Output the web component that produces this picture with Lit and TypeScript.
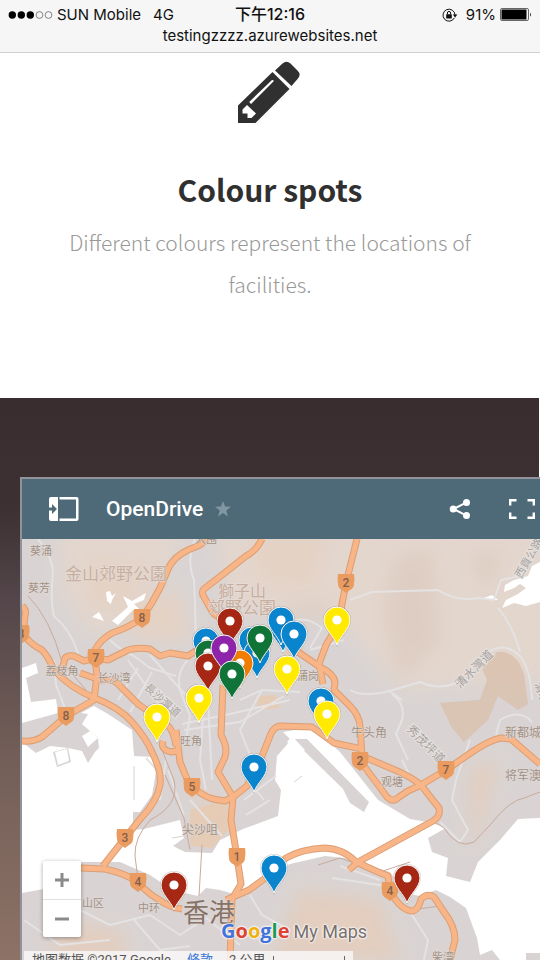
import { LitElement, html, svg, css } from "lit";
import { customElement } from "lit/decorators.js";

type Spot = [x: number, y: number, tone: string];

const BLUE = "#0a84cc";
const GREEN = "#107438";
const RED = "#a52714";
const YELLOW = "#ffea00";
const PURPLE = "#8e24aa";
const ORANGE = "#f07c00";

const spots: Spot[] = [
  [206, 641, BLUE], [208, 653, GREEN], [283, 627, BLUE], [281, 620, BLUE], [252, 640, BLUE],
  [257, 653, BLUE], [294, 634, BLUE], [240, 663, ORANGE], [230, 621, RED], [260, 638, GREEN],
  [208, 666, RED], [224, 648, PURPLE], [232, 674, GREEN], [337, 620, YELLOW], [287, 669, YELLOW],
  [199, 698, YELLOW], [157, 717, YELLOW], [321, 701, BLUE], [327, 714, YELLOW],
  [254, 767, BLUE], [274, 868, BLUE], [174, 885, RED], [407, 878, RED],
];

const shields: [number, number, string][] = [
  [142, 618, "8"], [96, 658, "7"], [66, 716, "8"], [21, 634, "8"], [346, 583, "2"], [192, 787, "5"],
  [125, 838, "3"], [138, 882, "4"], [237, 857, "1"], [360, 761, "2"], [446, 770, "7"], [390, 891, "4"],
];

const highways = [
  "M207 539L200 545L188 550Q175 556 169 567L160 588Q152 604 142 618Q128 628 112 633Q100 640 95 650L94 658",
  "M62 670L65 658Q68 655 74 656L84 661L96 658L108 660L128 650Q138 647 150 649L160 656L170 653L188 656L205 645",
  "M22 606Q27 610 25 616L23 634Q30 644 42 650Q48 656 54 670Q70 688 95 698Q120 708 132 722Q146 738 152 752Q162 772 160 785Q157 802 141 818L125 838L103 866",
  "M95 660L97 675L94 700L66 716Q54 727 42 737Q34 742 22 741",
  "M80 673L100 680Q114 678 120 686L138 704L166 724Q174 730 176 746",
  "M80 868L105 869Q124 873 138 882Q147 893 158 899Q170 908 182 909",
  "M357 539L346 583L338 625L326 645L319 664L323 684",
  "M298 652L320 667Q334 674 335 682L334 690L350 706Q359 715 360 726L362 756L395 770Q418 780 424 789L439 808Q441 816 433 821L358 862L349 870",
  "M364 766L387 797Q393 803 399 797L408 791L421 785L446 770L472 752Q490 740 501 738L511 739L540 764",
  "M233 797L247 786L262 756L270 736Q273 727 280 726L312 727L334 743L362 749",
  "M223 685L221 735Q228 747 225 757L218 772L233 797L231 820L237 857L241 884L232 899L230 960",
  "M163 741Q160 750 172 752L180 750M176 730L180 762L189 784Q202 796 213 799L225 801L233 797",
  "M226 900L249 890L264 879L286 858Q302 849 325 848Q344 849 356 862L378 872L388 876L390 891Q401 911 413 911Q419 909 421 899Q427 893 434 897L444 912Q455 926 455 940L450 960",
  "M262 539Q256 551 246 556L222 575L204 589Q201 592 204 597L213 613L226 622",
];

const lanes = [
  "M38 539Q52 555 53 572Q50 600 54 616Q70 630 76 648L80 660",
  "M54 660L56 685L68 716M110 640Q120 650 134 656L150 668L176 676",
  "M138 668L118 700M152 672L130 712M128 660L170 720M150 655L190 700M160 690L176 716",
  "M188 660Q176 672 180 690L190 716L186 740",
  "M182 724L230 714L290 700M184 730L240 722L284 696M205 690L200 760L206 790",
  "M195 539Q186 560 194 580L196 636M208 700L212 780M240 700L262 690L300 692M262 690L240 730L252 760",
  "M350 690Q362 697 386 692L420 682Q440 691 458 682L486 654Q503 640 520 656Q531 670 532 700",
  "M350 600L372 592L438 590Q456 602 478 598L494 600L501 580L520 576",
  "M498 608Q512 624 520 652M392 694Q406 704 402 720L396 734L408 760M402 700L388 690",
  "M280 630Q300 610 322 628L310 648M310 650L344 640",
  "M402 760L412 780L430 800M470 740L456 780L452 800L468 830L460 842L440 822M496 735L500 720Q520 708 532 722",
  "M80 910L110 925L150 915L180 935L206 918L240 945M134 920L160 950L190 946",
  "M24 920L60 945L110 940M250 895L262 915L290 930M410 912L428 940L424 960M340 866L380 880M332 878L386 886",
  "M146 758L164 778M166 760L160 800M168 770L184 815M190 800L222 836M244 800L276 776M246 815L270 800M240 770L264 800",
];

const tracks = [
  "M28 596Q50 618 62 662L86 690",
  "M160 745L174 780Q180 805 150 820Q134 838 135 856L138 880",
  "M165 775L184 818L190 850M202 845L199 896",
  "M432 820L444 828Q458 850 474 842L490 825Q510 800 524 798L540 792",
  "M318 865L340 858L380 872L410 862M410 910L440 906",
];

const labels: [number, number, string, number, string, number][] = [
  [41, 555, "葵涌", 11, "area", 0], [39, 592, "葵芳", 11, "area", 0],
  [116, 580, "金山郊野公園", 17, "park", 0], [242, 597, "獅子山", 16, "park", 0],
  [242, 614, "郊野公園", 17, "park", 0], [206, 543, "大围", 11, "area", 0],
  [62, 675, "荔枝角", 11, "area", 0], [114, 682, "长沙湾", 11, "area", 0],
  [191, 745, "旺角", 11, "area", 0], [200, 834, "尖沙咀", 12, "area", 0],
  [308, 680, "蒲岗", 11, "area", 0], [369, 737, "牛头角", 12, "area", 0],
  [392, 786, "观塘", 11, "area", 0], [523, 737, "新都城", 12, "area", 0],
  [523, 780, "将军澳", 12, "area", 0], [93, 907, "山区", 11, "area", 0],
  [149, 912, "中环", 11, "area", 0], [443, 961, "柴湾", 11, "area", 0],
  [209, 922, "香港", 26, "city", 0],
  [160, 703, "長沙灣道", 11, "street", 42], [477, 672, "清水灣道", 12, "street", -45],
  [423, 747, "秀茂坪道", 12, "street", 45], [532, 560, "西貢公路", 11, "street", -60],
  [538, 694, "清水", 11, "street", 70],
];

@customElement("spot-map")
class SpotMap extends LitElement {
  static styles = css`
    :host { display: block; }
    .canvas { display: block; width: 100%; height: 100%; }
    text { font-family: "Noto Sans CJK SC", sans-serif; text-anchor: middle; }
    .area { fill: #a19186; stroke: #e2dbd7; stroke-width: 1px; paint-order: stroke; }
    .park { fill: #c6aea1; stroke: #e8dfd9; stroke-width: 1px; paint-order: stroke; }
    .street { fill: #a6a19f; stroke: #e6e1de; stroke-width: 2px; paint-order: stroke; }
    .city { fill: #877268; stroke: #e2dbd7; stroke-width: 1px; paint-order: stroke; }
    .route { fill: #855f4c; font: 500 12px Roboto, sans-serif; }
    .water { fill: #fff; }
    .lane { fill: none; stroke: #e4e2e3; stroke-width: 2px; stroke-linejoin: round; }
    .track { fill: none; stroke: #c9aa9a; stroke-width: 1px; }
    .casing { fill: none; stroke: #dc9e74; stroke-width: 7px; stroke-linejoin: round; }
    .highway { fill: none; stroke: #f8b587; stroke-width: 5px; stroke-linejoin: round; }
    .shield { fill: #ea9b60; }
    .pin { stroke: #fff; stroke-width: 1px; }
    .halo { fill: #5a4a44; opacity: 0.25; }
  `;

  render() {
    return html`
      <svg class="canvas" viewBox="22 539 518 421" preserveAspectRatio="xMinYMin slice" role="img" aria-label="Map of Hong Kong">
        <defs>
          <filter id="soft" x="-30%" y="-30%" width="160%" height="160%"><feGaussianBlur stdDeviation="9" /></filter>
        </defs>
        <rect x="22" y="539" width="518" height="421" fill="#d9d4d3" />
        <g filter="url(#soft)">
          <path fill="#e3d6cd" d="M60 530H190L130 625L90 635L60 590ZM215 530H550V680L400 690L340 620L230 610Z" />
          <path fill="#e4d2c5" d="M90 560L150 570L120 610L85 605ZM130 600L180 590L190 640L130 640ZM250 530L330 530L310 590L260 580Z" />
          <path fill="#decdc2" d="M395 560L430 550L440 640L400 680L385 610ZM470 560L500 550L490 590ZM270 610L330 600L320 620Z" />
          <path fill="#e3cebf" d="M60 920L120 930L130 960H50ZM300 890L380 900L400 960H270ZM470 770L500 760L480 830L470 850ZM195 790L215 790L210 830Z" />
        </g>
        <path fill="#d9bfab" opacity=".8" d="M440 703L480 700L487 680L482 668L497 652Q516 650 524 674L528 704L518 710L498 696L488 720L464 742L452 728Z" />
        <path fill="#ecc6a5" opacity=".6" d="M257 696L276 695L280 708L258 710ZM190 810L226 800L232 826L212 848L190 846ZM290 642L300 640L304 652L284 656Z" />

        <path class="water" d="M22 668L36 663L38 673L26 678L31 702L56 699L58 713L22 723Z" />
        <path class="water" d="M22 742L36 753L50 746L68 748L82 751L88 763L95 752L99 748L98 738L82 724L88 714L81 713L94 706L108 714L132 730L134 756L153 757L156 772L152 795L140 812L133 812L133 830L144 829L180 820L184 838L173 846L185 852L212 853L220 840L243 829L278 816L281 790L275 780L277 756L291 740L283 732L312 727L340 752L378 800L410 819L432 823L446 828L428 838L432 852L448 858L446 876L470 882L478 862L500 840L518 819L540 818V953L526 953V960H500L492 950L480 955L477 938L466 908L450 897L436 890L420 896L405 893L390 872L345 858L325 856L290 864L260 880L234 894L220 890L206 888L198 896L172 890L150 875L120 862L82 862L60 886L22 893Z" />
        <path fill="#d9d4d3" d="M292 739L307 739L369 802L364 812L350 803L343 789ZM53 752L68 748L71 762L57 767Z" />
        <path fill="#fff" d="M55 752L67 749L69 761L58 765ZM287 742L292 736L305 750L298 754ZM307 736L314 734L326 746L321 750Z" />
        <path class="water" d="M106 592L110 591L112 596L116 593L112 600L111 604L107 601ZM123 596L132 601L146 593L144 600L134 604L142 612L133 610L118 625L112 621L128 607ZM92 617L99 612L104 621ZM82 736L90 731L98 738L88 747Z" />
        <path class="water" d="M540 562L532 566L528 576L514 580L505 585L504 592L514 588L520 584L526 588L518 594L506 600L502 608L514 603L526 606L540 602ZM484 598L492 595L498 600L492 600Z" />
        <path fill="none" stroke="#d6d3d2" d="M134 766V800M178 848L192 843M172 838L184 836M294 782L302 776" />

        ${lanes.map((d) => svg`<path class="lane" d=${d} />`)}
        ${tracks.map((d) => svg`<path class="track" d=${d} />`)}
        ${highways.map((d) => svg`<path class="casing" d=${d} />`)}
        ${highways.map((d) => svg`<path class="highway" d=${d} />`)}
        ${labels.map(
          ([x, y, t, size, kind, turn]) =>
            svg`<text class=${kind} font-size=${size} transform="translate(${x} ${y}) rotate(${turn})">${t}</text>`,
        )}
        ${shields.map(
          ([x, y, n]) => svg`<g transform="translate(${x} ${y})">
            <path class="shield" d="M-8 -9H8Q9 -4 8 1Q8 5 4 7L0 10L-4 7Q-8 5 -8 1Q-9 -4 -8 -9Z" />
            <text class="route" y="4">${n}</text></g>`,
        )}
        ${spots.map(
          ([x, y, tone]) => svg`<g transform="translate(${x} ${y})">
            <path class="halo" d="M0 27C-3 17 -14 10 -14 0A14 14 0 1 1 14 0C14 10 3 17 0 27Z" />
            <path class="pin" fill=${tone} d="M0 25C-3 16 -13 9 -13 0A13 13 0 1 1 13 0C13 9 3 16 0 25Z" />
            <circle r="4.6" fill="#fff" /></g>`,
        )}
      </svg>
    `;
  }
}

@customElement("app-root")
class AppRoot extends LitElement {
  static styles = css`
    :host {
      display: flex;
      flex-direction: column;
      height: 100vh;
      min-height: 600px;
      overflow: hidden;
      background: #fff;
      color: #111;
      font-family: Inter, "Noto Sans CJK TC", sans-serif;
    }
    .status {
      flex: none;
      background: #f6f6f6;
      border-bottom: 1px solid #cfcfcf;
      padding: 4px 8px 6px;
      font-size: 15px;
      line-height: 21px;
    }
    .row { display: grid; grid-template-columns: 1fr auto 1fr; align-items: center; }
    .carrier, .power { display: flex; align-items: center; }
    .power { justify-content: flex-end; gap: 4px; }
    .signal { margin-right: 4px; }
    .network { margin-left: 12px; }
    .time { font-size: 16px; font-weight: 500; }
    .lock { margin-right: 4px; }
    .address { display: block; text-align: center; color: inherit; text-decoration: none; }

    .feature {
      flex: none;
      display: flex;
      flex-direction: column;
      align-items: center;
      padding: 8px 32px 93px;
      text-align: center;
      font-family: "Noto Sans CJK SC", sans-serif;
    }
    .feature h2 { margin: 44px 0 10px; font-size: 30px; line-height: 44px; font-weight: 700; color: #303030; }
    .feature p { margin: 0; max-width: 420px; font-size: 21px; line-height: 42px; font-weight: 300; color: #999; }

    .stage {
      flex: 1;
      min-height: 0;
      display: flex;
      padding: 79px 0 0 20px;
      background: linear-gradient(#392d30 0, #3d3133 20%, #54464a 36%, #715d57 62%, #8d7266 100%) no-repeat 0 0 / calc(100% - 1px) 100%;
    }
    .embed {
      flex: 1;
      display: flex;
      flex-direction: column;
      border: solid #92929a;
      border-width: 2px 0 0 2px;
    }
    .toolbar {
      flex: none;
      display: flex;
      align-items: center;
      height: 60px;
      padding: 0 5px 0 27px;
      background: #4e6a79;
      color: #fff;
    }
    .toolbar h3 { margin: 0 12px 0 27px; font: 500 21px/28px Roboto, sans-serif; }
    button { display: grid; place-items: center; margin: 0; padding: 0; border: 0; background: none; color: inherit; font: inherit; }
    .share { margin-left: auto; margin-right: 38px; }
    svg { display: block; }

    .viewport { flex: 1; min-height: 0; position: relative; overflow: hidden; }
    .chart { height: 100%; }
    .zoom {
      position: absolute;
      left: 21px;
      bottom: 23px;
      width: 38px;
      background: #fff;
      border-radius: 2px;
      box-shadow: 0 1px 4px rgba(0, 0, 0, 0.35);
      color: #8a8a8a;
    }
    .zoom button { width: 100%; height: 38px; }
    .zoom button + button { border-top: 1px solid #e0e0e0; }
    .brand {
      position: absolute;
      left: 199px;
      bottom: 14px;
      display: flex;
      align-items: baseline;
      gap: 4px;
      font: 400 18px/28px Roboto, sans-serif;
      color: #77706d;
      text-shadow: 0 0 2px #fff, 0 0 2px #fff, 0 0 3px #fff;
    }
    .google { font: 700 20px/28px "Open Sans", sans-serif; }
    .b { color: #4273db; }
    .r { color: #dc4437; }
    .y { color: #eeb211; }
    .g { color: #1a9a57; }
    .credit {
      position: absolute;
      left: 2px;
      bottom: -9px;
      display: flex;
      align-items: center;
      height: 18px;
      padding: 0 8px;
      background: rgba(248, 247, 247, 0.85);
      font: 13px/18px Roboto, "Noto Sans CJK SC", sans-serif;
      color: #555;
    }
    .credit a { margin: 0 16px; color: #3b78d8; text-decoration: none; }
    .scale { width: 70px; height: 8px; margin-left: 8px; border: solid #666; border-width: 0 1px 1px; }
  `;

  render() {
    return html`
      <header class="status">
        <div class="row">
          <div class="carrier">
            <svg class="signal" width="45" height="10" viewBox="0 0 45 10" role="img" aria-label="Signal: 3 of 5">
              ${[4, 13, 22].map((x) => svg`<circle cx=${x + 0.3} cy="5" r="3.7" fill="#000" />`)}
              ${[31, 40].map((x) => svg`<circle cx=${x + 0.5} cy="5" r="3.4" fill="none" stroke="#555" stroke-width=".7" />`)}
            </svg>
            <span>SUN Mobile</span><span class="network">4G</span>
          </div>
          <span class="time">下午12:16</span>
          <div class="power">
            <svg class="lock" width="16" height="14" viewBox="0 0 16 14" role="img" aria-label="Rotation lock">
              <path d="M12.4 9.8A6 6 0 1 1 13 7" fill="none" stroke="#111" />
              <path d="M10.8 6.6H15.4L13.1 9.4Z" fill="#111" />
              <rect x="4.2" y="6.2" width="5.6" height="4.2" rx=".5" fill="#111" />
              <path d="M5.4 6.4V5A1.6 1.6 0 0 1 8.6 5V6.4" fill="none" stroke="#111" />
            </svg>
            <span>91%</span>
            <svg width="32" height="13" viewBox="0 0 32 13" role="img" aria-label="Battery">
              <rect x=".5" y=".5" width="28" height="12" rx="1.5" fill="none" stroke="#666" />
              <rect x="1.5" y="1.5" width="25" height="10" rx=".5" fill="#000" />
              <path d="M30 4.2Q31.8 6.5 30 8.8Z" fill="#222" />
            </svg>
          </div>
        </div>
        <a class="address" href="#">testingzzzz.azurewebsites.net</a>
      </header>

      <section class="feature">
        <svg width="64" height="62" viewBox="0 0 64 62" fill="#303030" aria-hidden="true">
          <path d="M37 9.5L44.5 2.5Q48.5 -0.8 52.5 2.5L59.5 9.5Q63.5 13.5 60 17.5L53.5 25Z" />
          <path fill-rule="evenodd" d="M0 44.5L34.5 11L51.5 28L17.5 62H0Z M11.2 41L13 43L35.2 20.8Q36.5 18.8 34 19ZM9 44L4.5 48.5V52.5H9.5V57H13.5L18 52.5Z" />
        </svg>
        <h2>Colour spots</h2>
        <p>Different colours represent the locations of facilities.</p>
      </section>

      <section class="stage">
        <div class="embed">
          <div class="toolbar">
            <button aria-label="Show legend">
              <svg width="30" height="24" viewBox="0 0 30 24">
                <path fill-rule="evenodd" fill="#fff" d="M2 0H9V24H2Q0 24 0 22V13.5H3V17L8 12L3 7V10.5H0V2Q0 0 2 0ZM10.5 0H27.5Q29.5 0 29.5 2V22Q29.5 24 27.5 24H10.5V21.5H27V2.5H10.5Z" />
              </svg>
            </button>
            <h3>OpenDrive</h3>
            <button aria-label="Star this map">
              <svg width="16" height="16" viewBox="0 0 16 16">
                <path fill="#8397a2" d="M8 0L10 5.6L16 5.8L11.2 9.4L13 15.4L8 11.9L3 15.4L4.8 9.4L0 5.8L6 5.6Z" />
              </svg>
            </button>
            <button class="share" aria-label="Share">
              <svg width="22" height="20" viewBox="0 0 22 20">
                <path d="M17.5 3.4L4.5 10L17.5 16.6" fill="none" stroke="#fff" stroke-width="2" />
                <circle cx="4.2" cy="10" r="3.5" fill="#fff" /><circle cx="17.5" cy="3.5" r="3.5" fill="#fff" />
                <circle cx="17.5" cy="16.5" r="3.5" fill="#fff" />
              </svg>
            </button>
            <button aria-label="Full screen">
              <svg width="26" height="20" viewBox="0 0 26 20">
                <path d="M1.2 6.5V1.2H7.5M18.5 1.2H24.8V6.5M24.8 13.5V18.8H18.5M7.5 18.8H1.2V13.5" fill="none" stroke="#fff" stroke-width="2.4" />
              </svg>
            </button>
          </div>
          <div class="viewport">
            <spot-map class="chart"></spot-map>
            <div class="zoom">
              <button aria-label="Zoom in">
                <svg width="14" height="14" viewBox="0 0 14 14"><path d="M7 0V14M0 7H14" stroke="currentColor" stroke-width="3" /></svg>
              </button>
              <button aria-label="Zoom out">
                <svg width="14" height="14" viewBox="0 0 14 14"><path d="M0 7H14" stroke="currentColor" stroke-width="3" /></svg>
              </button>
            </div>
            <div class="brand">
              <span class="google"><span class="b">G</span><span class="r">o</span><span class="y">o</span><span class="b">g</span><span class="g">l</span><span class="r">e</span></span>
              <span>My Maps</span>
            </div>
            <div class="credit">
              <span>地图数据 ©2017 Google</span><a href="#">條款</a><span>2 公里</span><span class="scale"></span>
            </div>
          </div>
        </div>
      </section>
    `;
  }
}
